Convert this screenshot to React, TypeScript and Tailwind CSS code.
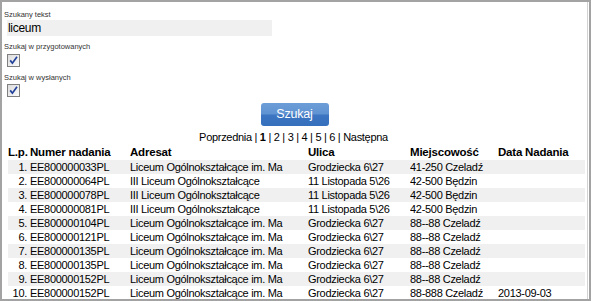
import React from "react"

const rows = [
  { no: "EE800000033PL", to: "Liceum Ogólnokształcące im. Ma", street: "Grodziecka 6\\27", city: "41-250 Czeladź", date: "" },
  { no: "EE800000064PL", to: "III Liceum Ogólnokształcące", street: "11 Listopada 5\\26", city: "42-500 Będzin", date: "" },
  { no: "EE800000078PL", to: "III Liceum Ogólnokształcące", street: "11 Listopada 5\\26", city: "42-500 Będzin", date: "" },
  { no: "EE800000081PL", to: "III Liceum Ogólnokształcące", street: "11 Listopada 5\\26", city: "42-500 Będzin", date: "" },
  { no: "EE800000104PL", to: "Liceum Ogólnokształcące im. Ma", street: "Grodziecka 6\\27", city: "88--88 Czeladź", date: "" },
  { no: "EE800000121PL", to: "Liceum Ogólnokształcące im. Ma", street: "Grodziecka 6\\27", city: "88--88 Czeladź", date: "" },
  { no: "EE800000135PL", to: "Liceum Ogólnokształcące im. Ma", street: "Grodziecka 6\\27", city: "88--88 Czeladź", date: "" },
  { no: "EE800000135PL", to: "Liceum Ogólnokształcące im. Ma", street: "Grodziecka 6\\27", city: "88--88 Czeladź", date: "" },
  { no: "EE800000152PL", to: "Liceum Ogólnokształcące im. Ma", street: "Grodziecka 6\\27", city: "88--88 Czeladź", date: "" },
  { no: "EE800000152PL", to: "Liceum Ogólnokształcące im. Ma", street: "Grodziecka 6\\27", city: "88-888 Czeladź", date: "2013-09-03" },
]

function Checkbox() {
  return (
    <div className="ml-[3px] w-[13px] h-[13px] border border-[#7f7f7f] bg-[linear-gradient(135deg,#dcdcdc,#fbfbfb)] flex items-center justify-center">
      <svg width="11" height="11" viewBox="0 0 11 11">
        <polyline points="2.2,5.4 4.4,8.2 9,1.8" fill="none" stroke="#21409a" strokeWidth="1.7" />
      </svg>
    </div>
  )
}

const cols = "grid grid-cols-[22px_100px_178px_102px_88px_87px]"

export default function App() {
  return (
    <div className="w-[591px] h-[301px] overflow-hidden border-2 border-[#a3a3a3] bg-white flex font-['Liberation_Sans',Arial,sans-serif] text-black">
      <div className="flex-1 mr-[1px] border-r border-[#d2d2d2] pl-[2px]">
        {/* search form */}
        <div className="h-[18px] pt-[8px] leading-[9px] text-[7.5px] text-[#333]">Szukany tekst</div>
        <div className="ml-[3px] w-[265px] h-[16px] bg-[#f0f0f0] pl-[1px] text-[12px] leading-[16px] tracking-[-0.3px]">liceum</div>
        <div className="h-[18px] pt-[6px] leading-[9px] text-[7.5px] text-[#333]">Szukaj w przygotowanych</div>
        <Checkbox />
        <div className="h-[17px] pt-[6px] leading-[9px] text-[7.5px] text-[#333]">Szukaj w wysłanych</div>
        <Checkbox />

        <div className="mt-[6px] flex justify-center pr-[2px]">
          <button className="w-[68px] h-[23px] rounded-[3px] bg-[linear-gradient(to_bottom,#6d9dd7_0%,#5f93d2_48%,#3c75c1_52%,#3570bd_100%)] text-white text-[12.5px] tracking-[-0.2px]">
            Szukaj
          </button>
        </div>

        {/* pagination */}
        <div className="pt-[4px] h-[18px] leading-[14px] text-[11px] tracking-[-0.3px] text-center pr-[4px]">
          Poprzednia | <b>1</b> | 2 | 3 | 4 | 5 | 6 | Następna
        </div>

        {/* results */}
        <div className="ml-[4px] w-[577px]">
          <div className={`${cols} h-[16px] leading-[16px] text-[11.5px] font-bold tracking-[-0.2px]`}>
            <div>L.p.</div>
            <div>Numer nadania</div>
            <div>Adresat</div>
            <div>Ulica</div>
            <div>Miejscowość</div>
            <div>Data Nadania</div>
          </div>
          {rows.map((r, i) => (
            <div
              key={i}
              className={`${cols} h-[14px] leading-[14px] text-[11px] tracking-[-0.3px] whitespace-nowrap ${i % 2 === 0 ? "bg-[#f0f0f0]" : ""}`}
            >
              <div className="text-right pr-[3px]">{i + 1}.</div>
              <div className="overflow-hidden">{r.no}</div>
              <div className="overflow-hidden">{r.to}</div>
              <div className="overflow-hidden">{r.street}</div>
              <div className="overflow-hidden">{r.city}</div>
              <div className="overflow-hidden">{r.date}</div>
            </div>
          ))}
        </div>
      </div>
    </div>
  )
}
